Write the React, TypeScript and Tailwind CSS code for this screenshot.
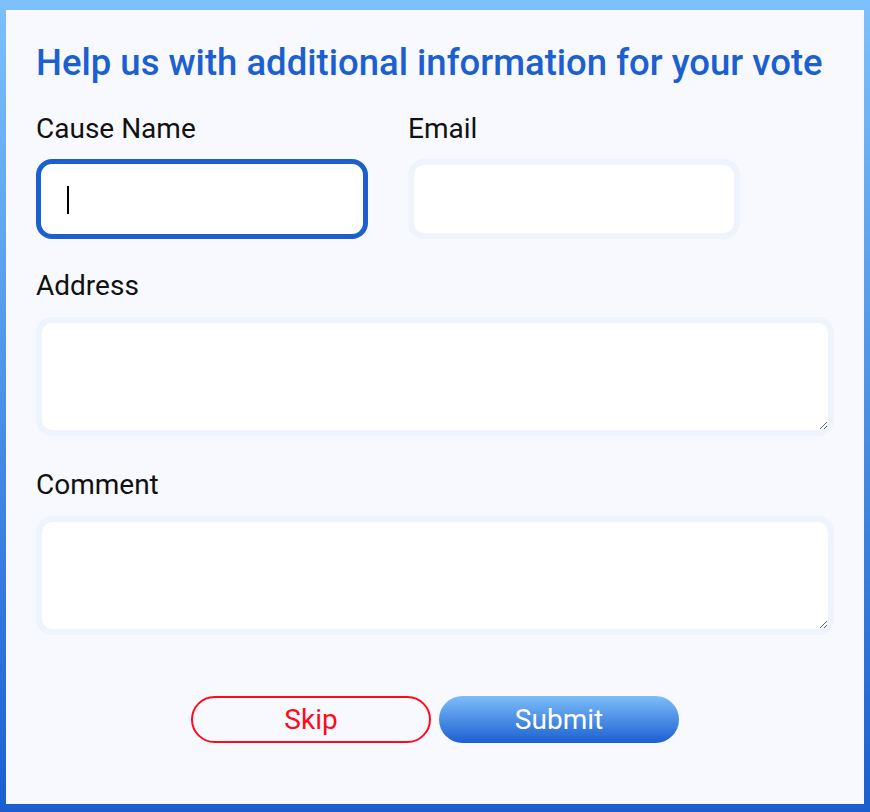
import { useState } from 'react';

const labelCls = "block text-[28px] leading-[28px] text-[#111111] font-['Roboto',sans-serif]";
const fieldCls =
  "w-full rounded-[16px] border-[6px] border-[#eff3fb] bg-white outline-none px-[24px] text-[22px] text-[#111111] font-['Roboto',sans-serif]";

const App = () => {
  const [form, setForm] = useState({ cause: '', email: '', address: '', comment: '' });

  const update = (key: keyof typeof form) => (e: React.ChangeEvent<HTMLInputElement | HTMLTextAreaElement>) =>
    setForm({ ...form, [key]: e.target.value });

  return (
    <div className="w-[870px] h-[812px] bg-gradient-to-b from-[#7cc1fb] to-[#1a5ed0] pt-[10px] px-[6px] pb-[8px]">
      <div className="h-full bg-[#f7f9ff] px-[30px] pt-[31px] font-['Roboto',sans-serif]">
        <h1 className="text-[36.5px] leading-[43px] font-medium text-[#1c60d0] whitespace-nowrap">
          Help us with additional information for your vote
        </h1>

        <div className="mt-[31px] flex gap-[40px]">
          <div className="w-[332px]">
            <label className={labelCls}>Cause Name</label>
            <div className="relative mt-[16px]">
              <input
                type="text"
                value={form.cause}
                onChange={update('cause')}
                className="w-full h-[80px] rounded-[16px] border-[5px] border-[#1c60d0] bg-white outline-none px-[26px] text-[22px] caret-transparent"
              />
              {form.cause === '' && (
                <span className="absolute left-[31px] top-[27px] w-[2px] h-[28px] bg-black" />
              )}
            </div>
          </div>
          <div className="w-[332px]">
            <label className={labelCls}>Email</label>
            <input
              type="email"
              value={form.email}
              onChange={update('email')}
              className={`${fieldCls} mt-[16px] h-[80px]`}
            />
          </div>
        </div>

        <label className={`${labelCls} mt-[33px]`}>Address</label>
        <textarea
          value={form.address}
          onChange={update('address')}
          className={`${fieldCls} mt-[17px] h-[119px] block py-[12px]`}
        />

        <label className={`${labelCls} mt-[35px]`}>Comment</label>
        <textarea
          value={form.comment}
          onChange={update('comment')}
          className={`${fieldCls} mt-[17px] h-[119px] block py-[12px]`}
        />

        <div className="mt-[61px] flex justify-center gap-[8px]">
          <button
            type="button"
            className="w-[240px] h-[47px] rounded-full border-2 border-[#ff0a1a] text-[#ff0a1a] text-[28px] leading-none bg-transparent"
          >
            Skip
          </button>
          <button
            type="submit"
            className="w-[240px] h-[47px] rounded-full bg-gradient-to-b from-[#7cbdf8] to-[#1c5fd0] text-white text-[28px] leading-none"
          >
            Submit
          </button>
        </div>
      </div>
    </div>
  );
};

export default App;
